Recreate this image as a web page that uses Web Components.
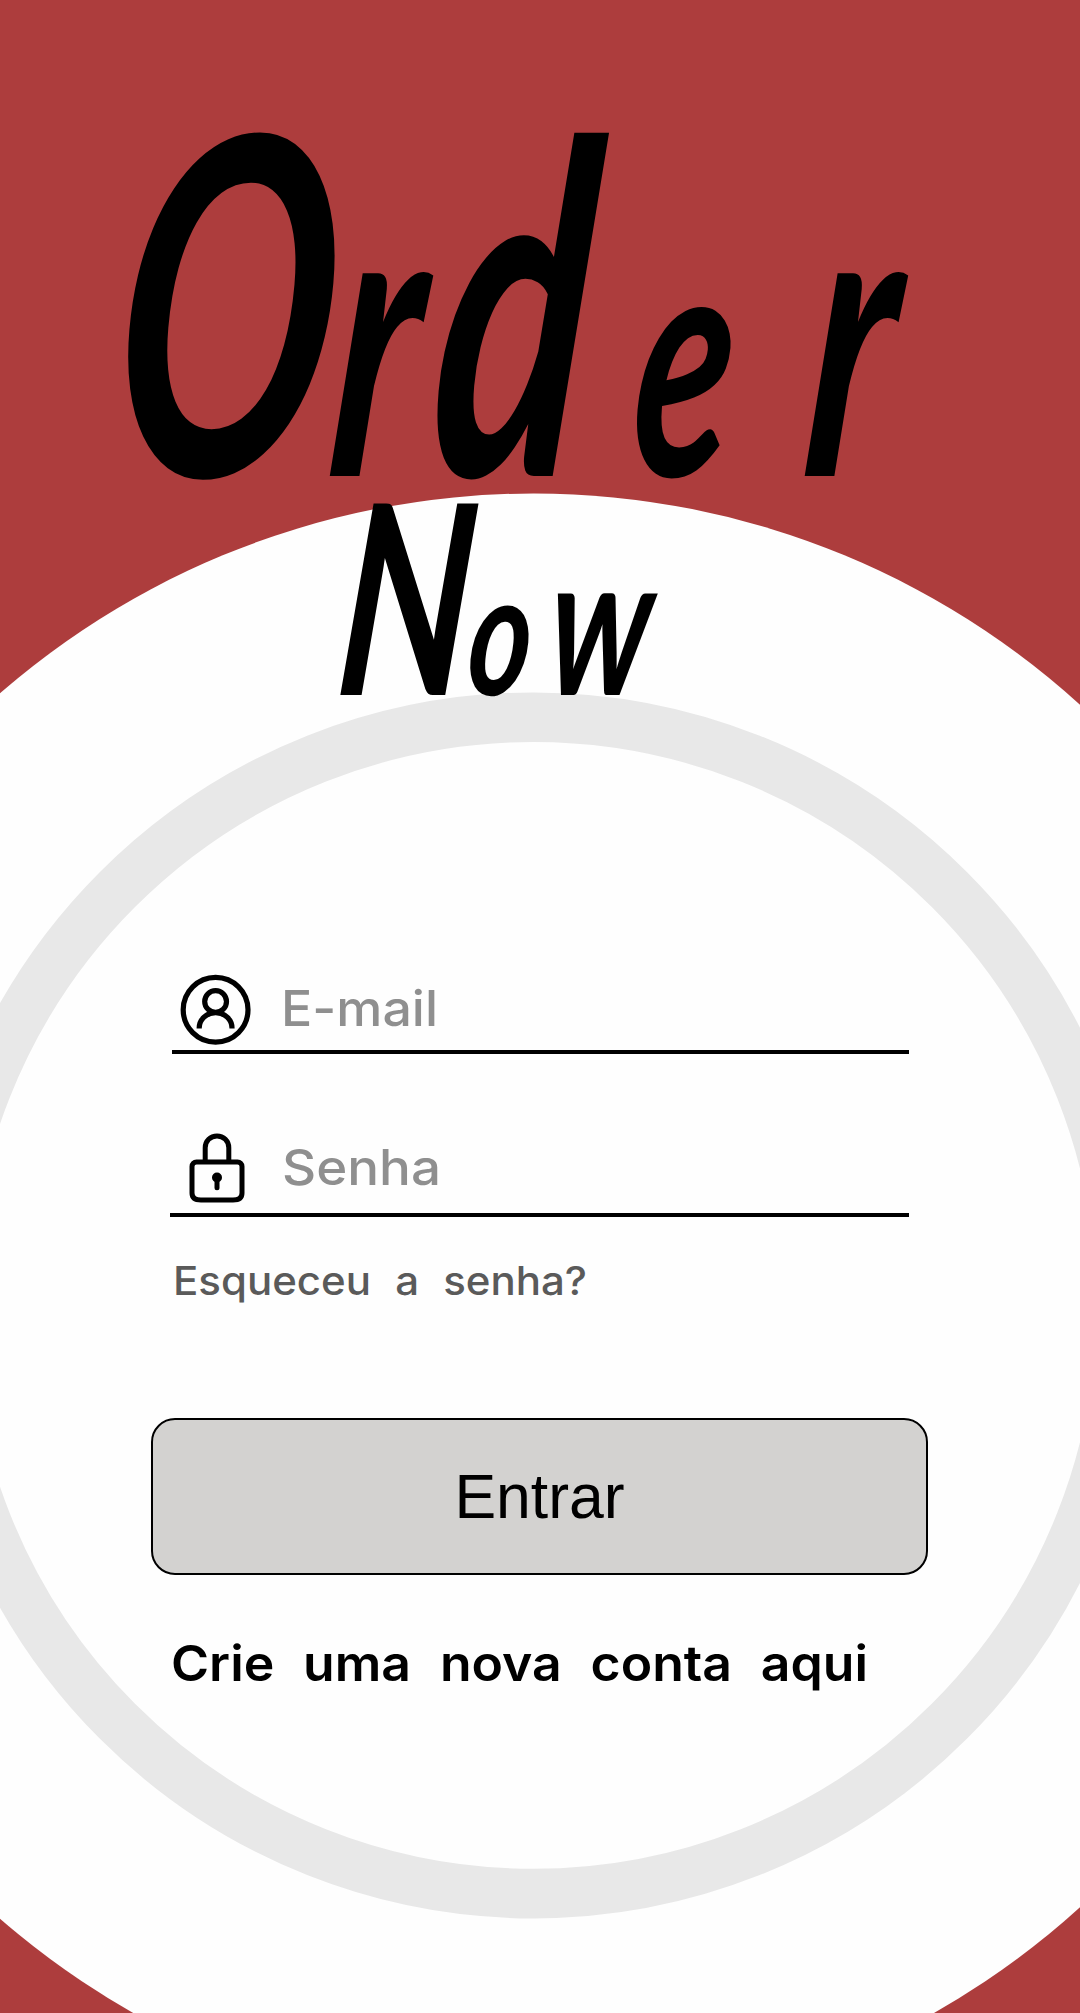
<!DOCTYPE html>
<html lang="pt-BR">
<head>
<meta charset="utf-8">
<title>Order Now</title>
<style>
  body { margin: 0; background: #ad3d3d; }
</style>
</head>
<body>
<login-screen>
  <order-logo></order-logo>
  <login-field style="--h:80px;--gap:109px;margin:250px 0 0 172px;width:737px">
    <user-icon slot="icon"></user-icon>
    <fit-text size="49" length="157" height="80" baseline="55.5" weight="500">E-mail</fit-text>
  </login-field>
  <login-field style="--h:83px;--gap:112px;margin:76px 0 0 170px;width:739px">
    <lock-icon slot="icon"></lock-icon>
    <fit-text size="49" length="159" height="83" baseline="55" weight="500">Senha</fit-text>
  </login-field>
  <fit-text style="color:#5a5a5a;margin:33px 0 0 173px" size="39" length="414" height="60" baseline="45" weight="500" gap="12">Esqueceu a senha?</fit-text>
  <login-button>Entrar</login-button>
  <fit-text style="margin:55px 0 0 171px" size="49" length="697" height="70" baseline="51" weight="600" gap="15">Crie uma nova conta aqui</fit-text>
</login-screen>

<script>
const define = (name, html, setup) => customElements.define(name, class extends HTMLElement {
  constructor() {
    super();
    this.attachShadow({ mode: 'open' }).innerHTML = html;
  }
  connectedCallback() { if (setup) setup(this, this.shadowRoot); }
});

define('login-screen', `
  <style>
    :host { display: block; position: relative; width: 1080px; height: 2013px; overflow: hidden; background: #ad3d3d; color: #000; }
    .plate { position: absolute; inset: 0; }
    main { position: relative; display: flex; flex-direction: column; align-items: flex-start; }
  </style>
  <svg class="plate" width="1080" height="2013" aria-hidden="true">
    <circle cx="533.6" cy="1306" r="812.5" fill="#fefefe"/>
    <circle cx="533.4" cy="1305.4" r="588.2" fill="none" stroke="#e8e8e8" stroke-width="49.6"/>
  </svg>
  <main><slot></slot></main>`);

define('order-logo', `
  <style>
    :host { display: block; height: 720px; }
    svg { display: block; overflow: visible; }
    text { font-family: Lato, sans-serif; font-style: italic; font-weight: 700; }
  </style>
  <svg width="1080" height="720" role="img" aria-label="Order Now">
    <text transform="translate(0 476) skewX(-5) scale(.62 1)" font-size="470"><tspan x="169">O</tspan><tspan x="524" font-size="395">r</tspan><tspan x="686" font-size="462">d</tspan><tspan x="1012" font-size="325">e</tspan><tspan x="1290" font-size="395">r</tspan></text>
    <text transform="translate(0 695) skewX(-5) scale(.7 1)" font-size="265"><tspan x="476">N</tspan><tspan x="664" font-size="172">o</tspan><tspan x="778" font-size="198">w</tspan></text>
  </svg>`);

define('login-field', `
  <style>
    :host { display: flex; height: var(--h); border-bottom: 4px solid #000; color: #8f8f8f; }
    .icon { flex: none; width: var(--gap); height: 100%; color: #000; }
  </style>
  <div class="icon"><slot name="icon"></slot></div>
  <slot></slot>`);

define('user-icon', `
  <style>:host { display: block; } svg { display: block; }</style>
  <svg width="84" height="80" viewBox="172 970 84 80" fill="none" stroke="currentColor" stroke-width="5.2">
    <circle cx="215.6" cy="1009.7" r="32.4"/>
    <circle cx="215.6" cy="1001.5" r="10.9"/>
    <path d="M199.2 1028.5V1028a16.4 15.3 0 0 1 32.8 0V1028.5"/>
  </svg>`);

define('lock-icon', `
  <style>:host { display: block; } svg { display: block; }</style>
  <svg width="84" height="83" viewBox="170 1129.5 84 83" fill="none" stroke="currentColor" stroke-width="5">
    <path d="M205.2 1161V1147.2a11.8 11.8 0 0 1 23.6 0V1161"/>
    <path d="M196.5 1161.5H237.5a4.5 4.5 0 0 1 4.5 4.5V1192.5q0 7-9 7H201q-9 0-9-7V1166a4.5 4.5 0 0 1 4.5-4.5Z"/>
    <circle cx="217" cy="1177" r="5" fill="currentColor" stroke="none"/>
    <path d="M217 1178V1187.3" stroke-linecap="round"/>
  </svg>`);

define('fit-text', `
  <style>
    :host { display: block; }
    svg { display: block; overflow: visible; }
    text { font-family: Inter, sans-serif; fill: currentColor; }
  </style>
  <svg><text x="0"></text></svg>`, (host, root) => {
  const svg = root.querySelector('svg'), text = root.querySelector('text');
  const get = n => host.getAttribute(n);
  svg.setAttribute('width', get('length'));
  svg.setAttribute('height', get('height'));
  text.setAttribute('y', get('baseline'));
  text.setAttribute('textLength', get('length'));
  text.setAttribute('lengthAdjust', 'spacingAndGlyphs');
  text.style.fontSize = get('size') + 'px';
  text.style.fontWeight = get('weight');
  text.style.wordSpacing = (get('gap') || 0) + 'px';
  text.textContent = host.textContent;
});

define('login-button', `
  <style>
    :host { display: block; margin: 108px 0 0 151px; }
    button { display: flex; align-items: center; justify-content: center; box-sizing: border-box; width: 777px; height: 157px;
      margin: 0; padding: 0 0 1px; border: 2px solid #000; border-radius: 24px; background: #d3d2d0; color: #000;
      font: 62.5px "Liberation Sans", Arial, sans-serif; }
  </style>
  <button type="button"><slot></slot></button>`);
</script>
</body>
</html>
